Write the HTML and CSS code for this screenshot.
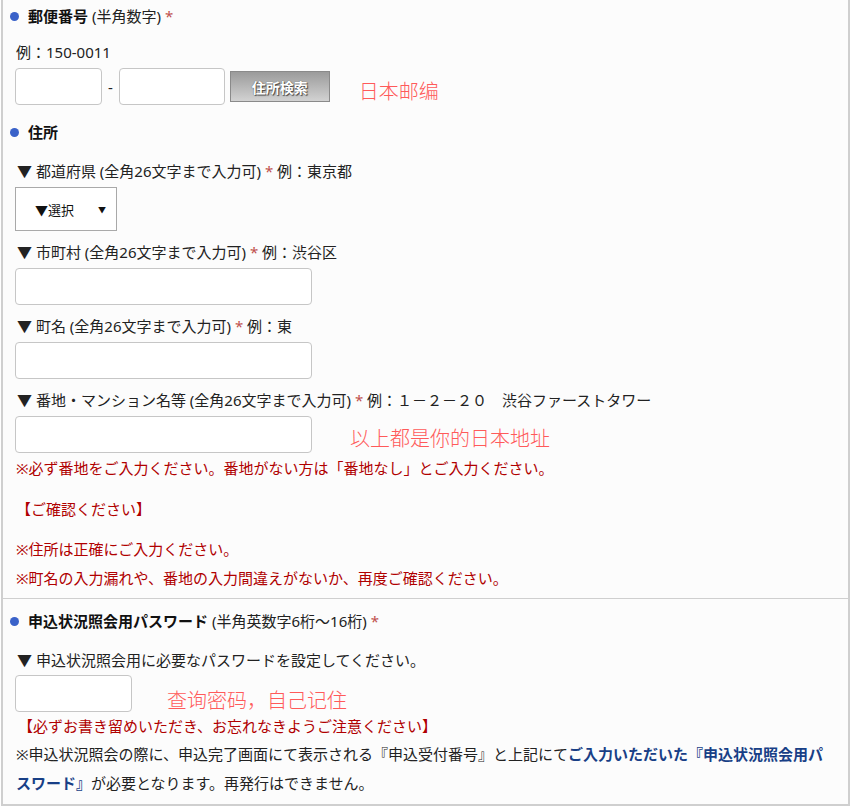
FILE: index.html
```html
<!DOCTYPE html>
<html lang="ja">
<head>
    <meta charset="UTF-8">
    <title>住所入力</title>
    <link rel="stylesheet" href="styles.css">
</head>
<body>
    <div class="form">
        <div class="section">
            <h3 class="item-title"><b>郵便番号</b> (半角数字) <span class="req">*</span></h3>
            <p class="example">例：150-0011</p>
            <div class="zip-row">
                <input type="text" class="input zip1">
                <span class="dash">-</span>
                <input type="text" class="input zip2">
                <button class="search-btn">住所検索</button>
                <span class="memo memo-zip">日本邮编</span>
            </div>

            <h3 class="item-title title-addr"><b>住所</b></h3>
            <p class="label">▼ 都道府県 (全角26文字まで入力可) <span class="req">*</span> 例：東京都</p>
            <div class="select-box">
                <span>▼選択</span>
                <span class="select-arrow">▼</span>
            </div>

            <p class="label">▼ 市町村 (全角26文字まで入力可) <span class="req">*</span> 例：渋谷区</p>
            <input type="text" class="input addr">

            <p class="label">▼ 町名 (全角26文字まで入力可) <span class="req">*</span> 例：東</p>
            <input type="text" class="input addr">

            <p class="label">▼ 番地・マンション名等 (全角26文字まで入力可) <span class="req">*</span> 例：１－２－２０　渋谷ファーストタワー</p>
            <div class="row">
                <input type="text" class="input addr">
                <span class="memo memo-addr">以上都是你的日本地址</span>
            </div>
            <p class="note note-first">※必ず番地をご入力ください。番地がない方は「番地なし」とご入力ください。</p>
            <p class="note note-check">【ご確認ください】</p>
            <p class="note note-gap">※住所は正確にご入力ください。</p>
            <p class="note note-last">※町名の入力漏れや、番地の入力間違えがないか、再度ご確認ください。</p>
        </div>

        <div class="section section-pass">
            <h3 class="item-title"><b>申込状況照会用パスワード</b> (半角英数字6桁～16桁) <span class="req">*</span></h3>
            <p class="label label-pass">▼ 申込状況照会用に必要なパスワードを設定してください。</p>
            <div class="row">
                <input type="password" class="input pass">
                <span class="memo memo-pass">查询密码，自己记住</span>
            </div>
            <p class="note note-keep">【必ずお書き留めいただき、お忘れなきようご注意ください】</p>
            <p class="info">※申込状況照会の際に、申込完了画面にて表示される『申込受付番号』と上記にて<strong>ご入力いただいた『申込状況照会用パスワード』</strong>が必要となります。再発行はできません。</p>
        </div>
    </div>
</body>
</html>
```

FILE: styles.css
```css
/* General styling */
body {
    margin: 0;
    background-color: #fff;
    font-family: "Noto Sans", "Noto Sans CJK JP", sans-serif;
    font-size: 15px;
    color: #222;
}
p, h3 {
    margin: 0;
}
.form {
    width: 845px;
    margin-left: 1px;
    background-color: #fcfcfc;
    border: solid #cfcfcf;
    border-width: 0 2px 2px 2px;
}
.section {
    padding: 6px 12px 10px 12px;
}
.section-pass {
    border-top: 1px solid #cfcfcf;
    padding-top: 12px;
    padding-bottom: 6px;
}

/* headings */
.item-title {
    font-size: 15px;
    font-weight: normal;
    line-height: 20px;
    display: flex;
    align-items: center;
    gap: 4px;
    margin-left: -5px;
}
.item-title::before {
    content: "";
    width: 9px;
    height: 9px;
    border-radius: 50%;
    background-color: #3a62c9;
    margin-right: 5px;
}
.item-title b {
    font-weight: bold;
    color: #111;
}
.title-addr {
    margin-top: 17px;
}
.req {
    color: #c0504d;
}

/* labels and text */
.example {
    margin-top: 16px;
    line-height: 20px;
    padding-left: 1px;
}
.label {
    line-height: 20px;
    margin-top: 11px;
    margin-bottom: 6px;
    padding-left: 2px;
}
.title-addr + .label {
    margin-top: 19px;
}
.label-pass {
    margin-top: 19px;
    margin-bottom: 5px;
}
.note {
    color: #b00000;
    line-height: 20px;
    padding-left: 1px;
}
.note-first {
    margin-top: 5px;
}
.note-check {
    margin-top: 21px;
}
.note-gap {
    margin-top: 20px;
}
.note-last {
    margin-top: 9px;
}
.note-keep {
    margin-top: 4px;
    padding-left: 3px;
}
.info {
    margin-top: 4px;
    line-height: 29px;
    padding-left: 1px;
    word-break: break-all;
}
.info strong {
    color: #183f86;
}

/* inputs */
.row, .zip-row {
    display: flex;
    align-items: center;
}
.zip-row {
    margin-top: 6px;
}
.input {
    height: 37px;
    box-sizing: border-box;
    border: 1px solid #c6c6c6;
    border-radius: 4px;
    background-color: #fff;
    margin: 0;
    padding: 0 6px;
    font-size: 14px;
}
.zip1 {
    width: 87px;
}
.dash {
    margin: 0 6px;
}
.zip2 {
    width: 106px;
}
.addr {
    width: 297px;
}
.pass {
    width: 117px;
}
.search-btn {
    margin-left: 5px;
    width: 100px;
    height: 31px;
    border: 1px solid #8a8a8a;
    background: linear-gradient(#9b9b9b, #d2d2d2);
    color: #fff;
    font-weight: bold;
    font-size: 14px;
    font-family: "Noto Sans CJK JP", sans-serif;
    text-shadow: 1px 1px 1px #444, 0 0 1px #555;
    padding: 0;
}
.select-box {
    width: 102px;
    height: 44px;
    box-sizing: border-box;
    border: 1px solid #a9a9a9;
    background-color: #fff;
    display: flex;
    align-items: center;
    justify-content: space-between;
    padding: 0 10px 0 19px;
    font-size: 13px;
    color: #111;
}
.select-arrow {
    font-size: 8px;
}

/* red annotations */
.memo {
    color: #ff5a5a;
    font-family: "Noto Sans CJK SC", sans-serif;
    font-weight: 300;
    font-size: 20px;
    line-height: 24px;
}
.memo-zip {
    margin-left: 29px;
    margin-top: 8px;
}
.memo-addr {
    margin-left: 38px;
    margin-top: 6px;
}
.memo-pass {
    margin-left: 35px;
    margin-top: 12px;
}
```
